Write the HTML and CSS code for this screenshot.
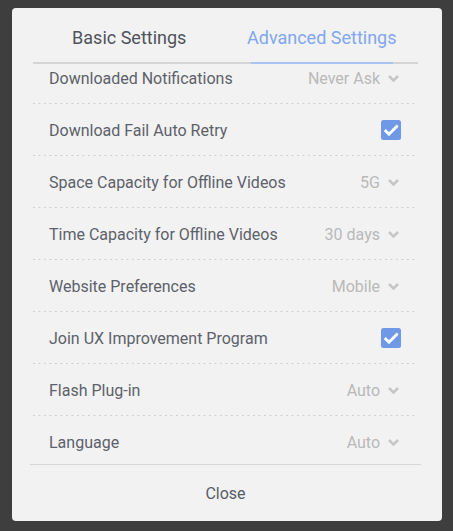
FILE: index.html
```html
<!DOCTYPE html>
<html lang="en">
<head>
    <meta charset="UTF-8">
    <title>Settings</title>
    <link rel="stylesheet" href="styles.css">
</head>
<body>

<div class="dialog">
    <div class="tabs">
        <div class="tab">Basic Settings</div>
        <div class="tab active">Advanced Settings</div>
    </div>

    <div class="list">
        <div class="rows">
            <div class="row">
                <span class="label">Downloaded Notifications</span>
                <span class="value">Never Ask <svg class="chev" width="11" height="7" viewBox="0 0 11 7"><polyline points="1,1 5.5,5.5 10,1"/></svg></span>
            </div>
            <div class="row">
                <span class="label">Download Fail Auto Retry</span>
                <svg class="check" width="20" height="20" viewBox="0 0 20 20"><rect width="20" height="20" rx="2.5"/><polyline points="3.8,10 8,14.3 16.6,5.6"/></svg>
            </div>
            <div class="row">
                <span class="label">Space Capacity for Offline Videos</span>
                <span class="value">5G <svg class="chev" width="11" height="7" viewBox="0 0 11 7"><polyline points="1,1 5.5,5.5 10,1"/></svg></span>
            </div>
            <div class="row">
                <span class="label">Time Capacity for Offline Videos</span>
                <span class="value">30 days <svg class="chev" width="11" height="7" viewBox="0 0 11 7"><polyline points="1,1 5.5,5.5 10,1"/></svg></span>
            </div>
            <div class="row">
                <span class="label">Website Preferences</span>
                <span class="value">Mobile <svg class="chev" width="11" height="7" viewBox="0 0 11 7"><polyline points="1,1 5.5,5.5 10,1"/></svg></span>
            </div>
            <div class="row">
                <span class="label">Join UX Improvement Program</span>
                <svg class="check" width="20" height="20" viewBox="0 0 20 20"><rect width="20" height="20" rx="2.5"/><polyline points="3.8,10 8,14.3 16.6,5.6"/></svg>
            </div>
            <div class="row">
                <span class="label">Flash Plug-in</span>
                <span class="value">Auto <svg class="chev" width="11" height="7" viewBox="0 0 11 7"><polyline points="1,1 5.5,5.5 10,1"/></svg></span>
            </div>
            <div class="row">
                <span class="label">Language</span>
                <span class="value">Auto <svg class="chev" width="11" height="7" viewBox="0 0 11 7"><polyline points="1,1 5.5,5.5 10,1"/></svg></span>
            </div>
        </div>
    </div>

    <div class="footer">Close</div>
</div>

</body>
</html>
```

FILE: styles.css
```css
body {
    margin: 0;
    padding: 8px 11px 10px 12px;
    background-color: #3e3e3e;
    font-family: Roboto, "Liberation Sans", sans-serif;
}
.dialog {
    height: 513px;
    background-color: #f2f2f2;
    border-radius: 4px;
    display: flex;
    flex-direction: column;
    overflow: hidden;
}
.tabs {
    display: flex;
    margin: 0 24px 0 21px;
    height: 54px;
    border-bottom: 2px solid #d4d4d4;
}
.tab {
    flex: 1;
    display: flex;
    justify-content: center;
    align-items: center;
    font-size: 18px;
    color: #4f535c;
    padding-top: 4px;
    position: relative;
}
.tab.active {
    color: #80a7ef;
}
.tab.active::after {
    content: "";
    position: absolute;
    left: 25px;
    width: 142px;
    bottom: -2px;
    height: 2px;
    background-color: #a9c4f1;
}
.list {
    height: 400px;
    margin: 0 24px 0 21px;
    overflow: hidden;
}
.rows {
    margin-top: -12px; /* scrolled a little */
}
.row {
    height: 51px;
    display: flex;
    align-items: center;
    justify-content: space-between;
    padding: 0 17px 0 16px;
    border-bottom: 1px solid transparent;
    background-image: linear-gradient(to right, #cdcdcd 2px, transparent 2px);
    background-size: 5.5px 1px;
    background-repeat: repeat-x;
    background-origin: border-box;
    background-position: left bottom;
    font-size: 16px;
}
.label {
    color: #5d616a;
    padding-top: 1px;
}
.value {
    color: #b9b9b9;
    display: flex;
    align-items: center;
    gap: 8px;
    padding-right: 2px;
    padding-top: 1px;
}
.chev polyline {
    fill: none;
    stroke: #c6c6c6;
    stroke-width: 2.5;
}
.check rect {
    fill: #6f98e7;
}
.check polyline {
    fill: none;
    stroke: #fff;
    stroke-width: 2.8;
}
.footer {
    margin: 0 21px 0 18px;
    border-top: 1px solid #d6d6d6;
    flex: 1;
    display: flex;
    justify-content: center;
    align-items: center;
    font-size: 16px;
    color: #585c65;
}
```
